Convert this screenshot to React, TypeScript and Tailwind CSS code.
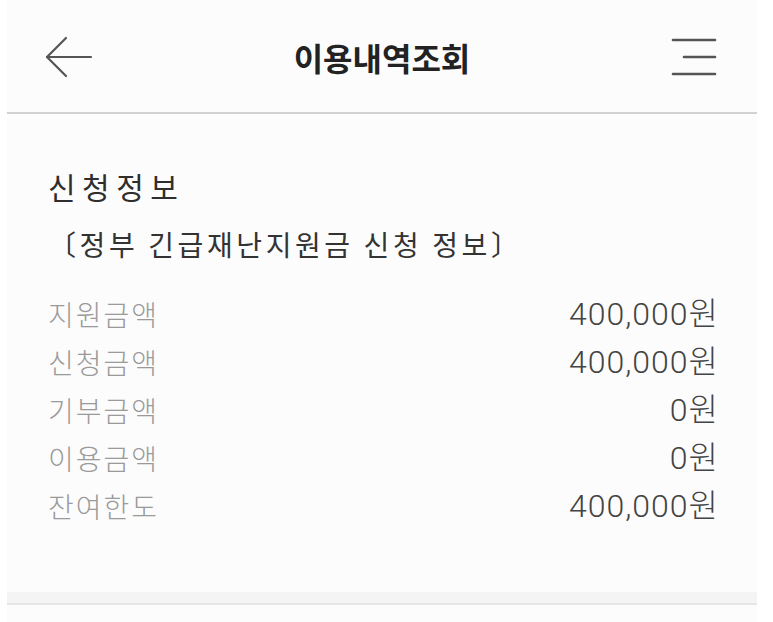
const rows = [
  { label: "지원금액", value: "400,000원" },
  { label: "신청금액", value: "400,000원" },
  { label: "기부금액", value: "0원" },
  { label: "이용금액", value: "0원" },
  { label: "잔여한도", value: "400,000원" },
];

function BackArrow() {
  return (
    <svg width="50" height="42" viewBox="0 0 50 42" fill="none" stroke="#555" strokeWidth="2.2" strokeLinecap="round" strokeLinejoin="round">
      <path d="M22 2 L3 21 L22 40" />
      <path d="M3 21 H47" />
    </svg>
  );
}

function MenuIcon() {
  return (
    <svg width="46" height="40" viewBox="0 0 46 40" fill="none" stroke="#555" strokeWidth="2.6" strokeLinecap="round">
      <path d="M2 3 H44" />
      <path d="M13 20 H44" />
      <path d="M2 37 H44" />
    </svg>
  );
}

export default function App() {
  return (
    <div className="min-h-[622px] bg-white font-['Noto_Sans_CJK_KR',sans-serif]">
      <div className="ml-[7px] flex min-h-[622px] w-[750px] flex-col bg-[#fcfcfc]">
        <header className="grid h-[114px] grid-cols-[1fr_auto_1fr] items-center border-b-2 border-[#d2d2d2] pt-[2px]">
          <button type="button" className="ml-[37px] justify-self-start">
            <BackArrow />
          </button>
          <h1 className="text-[32px] font-bold text-[#222]">이용내역조회</h1>
          <button type="button" className="mr-[40px] justify-self-end">
            <MenuIcon />
          </button>
        </header>

        <section className="px-[41px] pt-[52px] pb-[62px]">
          <h2 className="text-[30px] leading-[40px] tracking-[6.5px] text-[#2e2e2e]">신청정보</h2>
          <p className="mt-[18px] text-[28px] leading-[40px] tracking-[3.6px] text-[#333]">〔정부 긴급재난지원금 신청 정보〕</p>

          <dl className="mt-[26px]">
            {rows.map((row) => (
              <div key={row.label} className="flex h-[48px] items-center justify-between">
                <dt className="text-[28px] font-light tracking-[2px] text-[#9a9a9a]">{row.label}</dt>
                <dd className="-mr-[3px] font-['Roboto','Noto_Sans_CJK_KR',sans-serif] text-[32px] font-light tracking-[1px] text-[#444]">{row.value}</dd>
              </div>
            ))}
          </dl>
        </section>

        <div className="h-[11px] bg-[#f4f4f4]" />
        <div className="h-[2px] bg-[#e6e6e6]" />
        <div className="flex-1" />
      </div>
    </div>
  );
}
